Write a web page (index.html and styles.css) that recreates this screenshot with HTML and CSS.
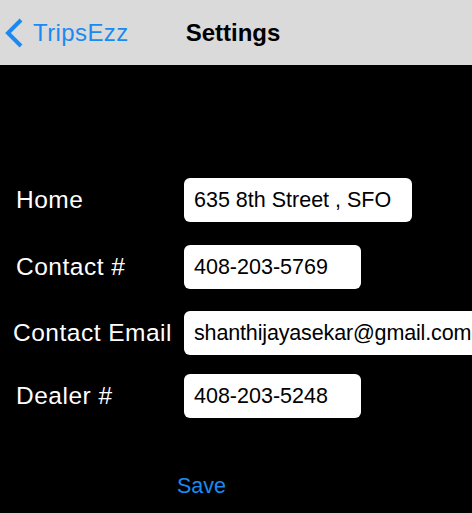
FILE: index.html
```html
<!DOCTYPE html>
<html>
<head>
<meta charset="utf-8">
<link rel="stylesheet" href="styles.css">
</head>
<body>
<div class="screen">
  <header class="navbar">
    <a class="back">
      <svg class="chevron" width="20" height="30" viewBox="0 0 20 30"><path d="M17 2 L4 15 L17 28" fill="none" stroke="#1a8af0" stroke-width="4"/></svg>
      <span class="back-label">TripsEzz</span>
    </a>
    <h1 class="title">Settings</h1>
  </header>
  <main class="form">
    <div class="row row-home">
      <label class="label">Home</label>
      <div class="field field-home">635 8th Street , SFO</div>
    </div>
    <div class="row row-contact">
      <label class="label">Contact #</label>
      <div class="field field-short">408-203-5769</div>
    </div>
    <div class="row row-email">
      <label class="label label-email">Contact Email</label>
      <div class="field field-email"><span class="email-text">shanthijayasekar@gmail.com</span></div>
    </div>
    <div class="row row-dealer">
      <label class="label">Dealer #</label>
      <div class="field field-short">408-203-5248</div>
    </div>
    <div class="save-wrap"><button class="save">Save</button></div>
  </main>
</div>
</body>
</html>
```
FILE: styles.css
```css
html, body {
  margin: 0;
  padding: 0;
  background: #000;
  overflow: hidden;
}
body {
  width: 472px;
  height: 513px;
  font-family: "Liberation Sans", Arial, sans-serif;
}
.screen {
  display: flex;
  flex-direction: column;
  height: 513px;
}
.navbar {
  height: 65px;
  background: #dadada;
  display: flex;
  align-items: center;
  flex-shrink: 0;
}
.back {
  display: flex;
  align-items: center;
  margin-left: 4px;
  color: #1a8af0;
}
.chevron {
  display: block;
  margin-top: 1px;
}
.back-label {
  font-size: 24px;
  letter-spacing: 0.4px;
  margin-left: 9px;
}
.title {
  margin: 0 0 0 57px;
  font-size: 24px;
  font-weight: bold;
  color: #000;
}
.form {
  display: flex;
  flex-direction: column;
  padding-top: 113px;
}
.row {
  display: flex;
  align-items: center;
  height: 44px;
}
.row-contact { margin-top: 23px; }
.row-email { margin-top: 22px; }
.row-dealer { margin-top: 19px; }
.label {
  color: #fff;
  font-size: 24.5px;
  letter-spacing: 0.5px;
  width: 168px;
  padding-left: 16px;
  flex-shrink: 0;
  white-space: nowrap;
}
.label-email {
  padding-left: 13px;
  width: 171px;
}
.field {
  height: 44px;
  box-sizing: border-box;
  background: #fff;
  border-radius: 6px;
  padding-left: 10px;
  display: flex;
  align-items: center;
  font-size: 21.5px;
  color: #000;
  white-space: nowrap;
  flex-shrink: 0;
}
.field-home { width: 228px; }
.field-short { width: 177px; }
.field-email { width: 300px; }
.email-text {
  letter-spacing: -0.15px;
}
.save-wrap {
  display: flex;
  padding-left: 177px;
  margin-top: 56px;
}
.save {
  background: none;
  border: none;
  padding: 0;
  font-family: "Liberation Sans", Arial, sans-serif;
  font-size: 21.5px;
  color: #1a8af0;
}
```
